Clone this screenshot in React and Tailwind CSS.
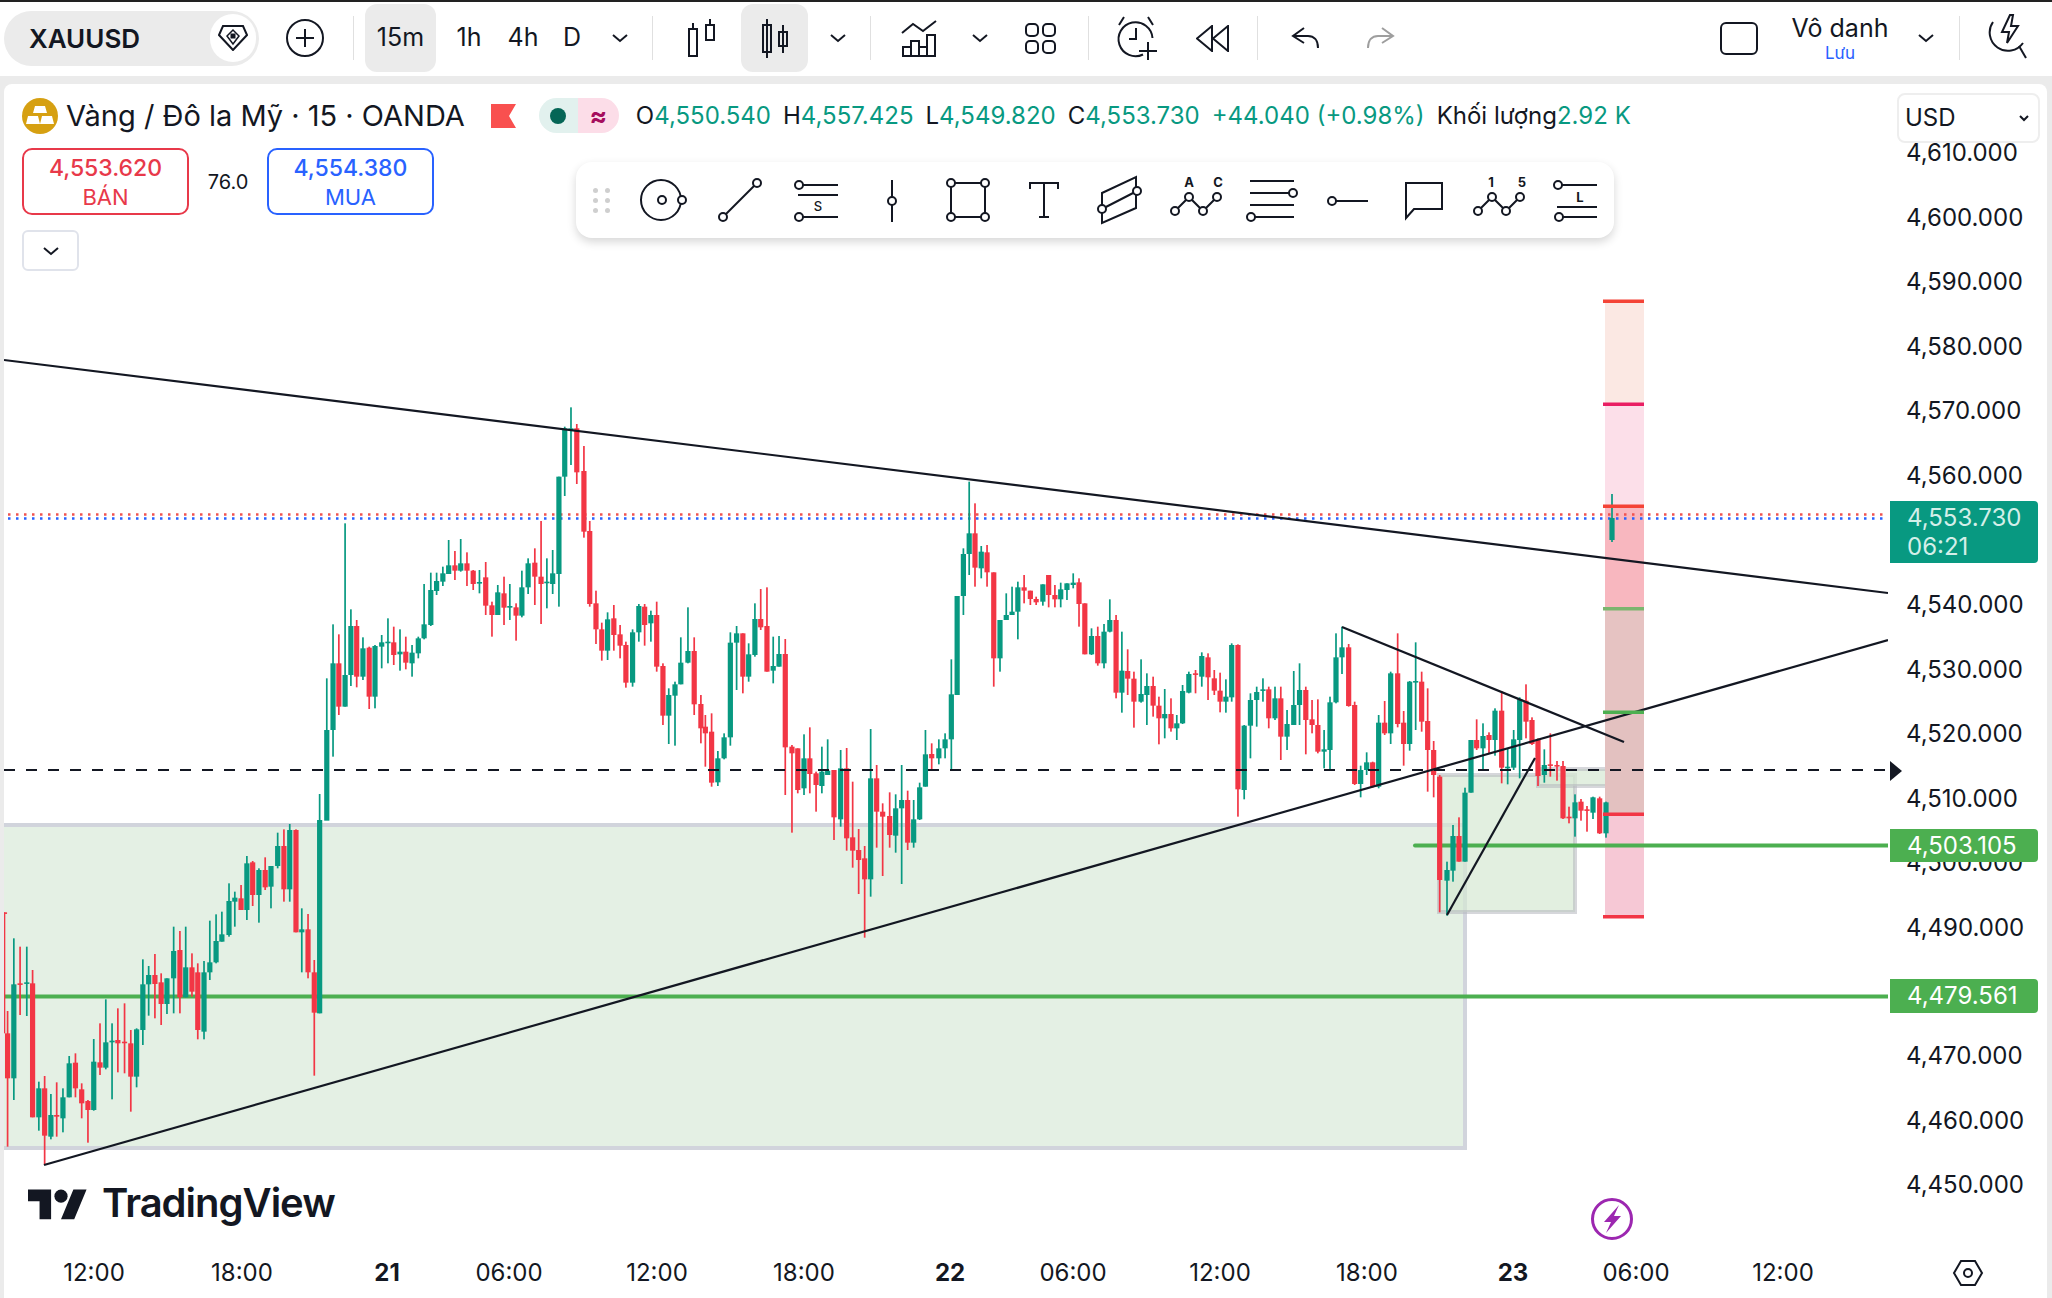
import React from 'react';

// candles traced off the chart: [x, bodyTop, bodyBottom, wickTop, wickBottom, isUp]
const trace = (ox, sx, oy, sy, rows) =>
  rows.map(([x, t, b, wt, wb, up]) => ({
    x: ox + x / sx,
    t: oy + t / sy,
    b: oy + b / sy,
    wt: oy + wt / sy,
    wb: oy + wb / sy,
    up,
  }));

const leftRows = [
  [10, 337, 337, 337, 700, 0], [17, 700, 835, 633, 1040, 0], [31, 553, 835, 415, 900, 1], [45, 550, 553, 440, 645, 0],
  [60, 547, 550, 440, 648, 1], [73, 550, 952, 510, 952, 0], [87, 865, 952, 845, 992, 1], [100, 865, 1007, 828, 1095, 0],
  [114, 945, 1010, 882, 1018, 1], [127, 945, 950, 847, 1010, 0], [141, 892, 955, 865, 997, 1], [155, 790, 892, 768, 892, 1],
  [169, 788, 865, 760, 892, 0], [183, 868, 910, 850, 955, 0], [197, 903, 930, 900, 1028, 0], [210, 785, 930, 717, 932, 1],
  [224, 787, 803, 670, 825, 0], [237, 727, 803, 598, 808, 1], [251, 722, 727, 670, 898, 1], [264, 720, 730, 625, 817, 0],
  [279, 725, 728, 610, 820, 0], [293, 730, 830, 690, 935, 0], [306, 688, 830, 685, 862, 1], [320, 553, 690, 478, 735, 1],
  [333, 525, 553, 498, 647, 1], [347, 525, 552, 462, 655, 0], [361, 547, 612, 520, 675, 0], [374, 535, 612, 535, 642, 1],
  [389, 453, 535, 380, 640, 1], [403, 450, 592, 393, 640, 0], [416, 502, 592, 380, 592, 1], [430, 502, 575, 460, 590, 0],
  [443, 517, 690, 490, 718, 0], [457, 517, 695, 483, 718, 1], [470, 487, 517, 362, 540, 1], [484, 423, 487, 343, 490, 1],
  [497, 403, 425, 335, 425, 1], [513, 303, 405, 250, 410, 1], [526, 293, 305, 275, 380, 1], [540, 295, 330, 255, 330, 0],
  [553, 190, 330, 168, 360, 1], [566, 187, 285, 183, 318, 0], [580, 210, 285, 205, 368, 1], [594, 210, 262, 172, 270, 0],
  [607, 198, 260, 198, 325, 1], [622, 138, 198, 98, 205, 1], [636, 138, 268, 88, 305, 0], [649, 90, 268, 72, 305, 1],
  [663, 90, 397, 88, 397, 0], [676, 388, 397, 325, 517, 1], [690, 388, 517, 342, 535, 0], [704, 517, 638, 480, 827, 0],
  [716, 60, 640, -18, 640, 1],
];

const upperRows = [
  [732, 1050, 1322, 895, 1130, 1], [746, 850, 1050, 733, 1130, 1], [759, 850, 980, 763, 1005, 0], [773, 885, 980, 430, 980, 1],
  [786, 738, 885, 688, 918, 1], [799, 738, 890, 720, 922, 0], [813, 805, 890, 772, 900, 1], [827, 803, 950, 800, 987, 0],
  [840, 798, 950, 795, 985, 1], [855, 787, 800, 765, 865, 1], [869, 785, 788, 715, 850, 1], [882, 787, 825, 740, 855, 0],
  [896, 815, 823, 748, 872, 1], [909, 815, 848, 770, 868, 0], [923, 818, 850, 795, 890, 1], [937, 775, 820, 770, 835, 1],
  [950, 733, 775, 612, 778, 1], [965, 630, 735, 578, 738, 1], [978, 603, 633, 578, 645, 1], [992, 580, 605, 560, 618, 1],
  [1005, 556, 582, 480, 582, 1], [1019, 556, 572, 513, 600, 0], [1032, 550, 572, 477, 575, 1], [1046, 550, 572, 517, 618, 0],
  [1060, 572, 612, 570, 630, 0], [1074, 606, 609, 570, 640, 1], [1088, 592, 677, 546, 705, 0], [1102, 676, 705, 665, 770, 0],
  [1115, 637, 705, 615, 705, 1], [1129, 640, 683, 590, 735, 0], [1142, 678, 683, 612, 720, 1], [1156, 682, 707, 670, 782, 0],
  [1169, 622, 707, 572, 712, 1], [1183, 550, 622, 535, 642, 1], [1198, 548, 590, 505, 675, 0], [1212, 590, 612, 423, 732, 0],
  [1225, 605, 608, 535, 685, 1], [1238, 580, 612, 510, 642, 1], [1252, 290, 582, 290, 680, 1], [1265, 145, 290, 140, 348, 1],
  [1279, 145, 152, 82, 255, 1], [1292, 145, 277, 132, 312, 0], [1308, 273, 455, 198, 473, 0], [1321, 453, 672, 423, 680, 0],
  [1335, 670, 748, 632, 792, 0], [1348, 748, 812, 728, 842, 0], [1361, 718, 812, 697, 840, 1], [1375, 715, 765, 675, 812, 0],
  [1389, 763, 797, 735, 835, 0], [1402, 795, 908, 785, 923, 0], [1417, 757, 908, 748, 920, 1], [1431, 678, 757, 672, 785, 1],
  [1444, 680, 735, 672, 797, 0], [1458, 705, 730, 692, 785, 1], [1471, 705, 860, 665, 875, 0], [1485, 858, 1007, 850, 1035, 0],
  [1498, 945, 1007, 925, 1092, 1], [1512, 913, 947, 905, 1097, 1], [1525, 848, 913, 772, 913, 1], [1541, 813, 848, 682, 850, 1],
  [1555, 813, 973, 772, 1005, 0],
];

const middleRows = [
  [2, 912, 985, 885, 1030, 0], [12, 980, 1000, 945, 1100, 0], [26, 995, 1148, 940, 1160, 0], [40, 1075, 1147, 1053, 1158, 1],
  [54, 1012, 1075, 1000, 1078, 1], [68, 728, 1012, 697, 1037, 1], [82, 700, 728, 678, 870, 1], [96, 700, 830, 700, 880, 0],
  [109, 763, 830, 730, 845, 1], [123, 657, 765, 610, 770, 1], [136, 657, 682, 567, 690, 0], [150, 678, 815, 562, 815, 0],
  [164, 798, 812, 710, 850, 1], [177, 762, 800, 708, 800, 1], [191, 762, 1042, 717, 1185, 0], [206, 1040, 1060, 1035, 1298, 0],
  [219, 1045, 1170, 1045, 1180, 0], [233, 1075, 1165, 1003, 1185, 1], [246, 1075, 1122, 982, 1180, 0], [260, 1120, 1155, 1115, 1235, 0],
  [273, 1115, 1158, 1040, 1180, 1], [286, 1112, 1125, 1018, 1125, 1],
];

const dipRows = [
  [102, 30, 172, 30, 240, 0], [122, 25, 178, -30, 200, 1], [140, 25, 235, -36, 272, 0], [158, 232, 272, 65, 323, 0],
  [176, 270, 300, 207, 402, 0], [194, 295, 358, 258, 533, 0], [212, 55, 358, -93, 410, 1], [230, 55, 155, 15, 263, 0],
  [248, 155, 170, 130, 348, 0], [269, 168, 225, 97, 263, 0], [287, 145, 227, 103, 278, 1], [305, 120, 145, 15, 372, 1],
  [323, 120, 248, 92, 270, 0], [341, 178, 248, 120, 263, 1], [359, 82, 178, 68, 180, 1],
];

const afterDipRows = [
  [505, 1063, 1160, 990, 1160, 1], [519, 1062, 1075, 1030, 1110, 0], [535, 1045, 1075, 1018, 1093, 1], [549, 1018, 1045, 1000, 1075, 1],
  [563, 883, 1018, 778, 1112, 1], [576, 588, 885, 588, 885, 1], [590, 462, 588, 445, 645, 1], [603, 400, 462, 245, 525, 1],
  [616, 400, 503, 310, 560, 0], [630, 455, 505, 438, 535, 1], [643, 457, 517, 435, 560, 0], [658, 517, 775, 517, 860, 0],
  [672, 660, 775, 660, 815, 1], [686, 645, 660, 580, 660, 1], [699, 635, 645, 560, 645, 1], [712, 562, 635, 545, 718, 1],
  [726, 562, 572, 525, 610, 0], [740, 572, 597, 572, 615, 0], [753, 597, 607, 590, 615, 0], [768, 553, 605, 553, 617, 1],
  [781, 525, 585, 525, 622, 0], [795, 585, 598, 555, 622, 0], [808, 568, 598, 548, 622, 1], [822, 550, 570, 550, 600, 1],
  [836, 548, 555, 520, 565, 1], [849, 547, 612, 535, 680, 0], [862, 610, 763, 610, 763, 0], [877, 708, 763, 685, 765, 1],
  [891, 708, 790, 680, 797, 0], [905, 695, 790, 672, 805, 1], [918, 660, 695, 598, 697, 1], [932, 660, 878, 645, 895, 0],
  [945, 812, 878, 695, 938, 1], [958, 813, 836, 748, 885, 0], [972, 836, 905, 815, 983, 0], [988, 882, 905, 778, 908, 1],
  [1001, 858, 885, 820, 975, 1], [1015, 858, 917, 830, 950, 0], [1028, 917, 955, 890, 1033, 0], [1041, 942, 955, 867, 1015, 1],
  [1055, 942, 985, 895, 995, 0], [1068, 970, 985, 945, 1020, 1], [1081, 873, 970, 855, 972, 1], [1095, 822, 878, 815, 880, 1],
  [1110, 820, 823, 810, 880, 0], [1124, 768, 830, 757, 860, 1], [1138, 772, 832, 760, 900, 0], [1152, 835, 872, 810, 885, 0],
  [1165, 872, 905, 818, 937, 0], [1178, 890, 905, 838, 938, 1], [1191, 735, 892, 730, 905, 1], [1205, 735, 1168, 733, 1250, 0],
  [1219, 977, 1170, 975, 1198, 1], [1233, 900, 977, 880, 1075, 1], [1247, 876, 900, 860, 980, 1], [1261, 868, 872, 835, 905, 1],
  [1274, 868, 955, 860, 985, 0], [1288, 895, 955, 860, 960, 1], [1301, 895, 1010, 860, 1080, 0], [1315, 972, 1010, 930, 1050, 1],
  [1330, 915, 975, 813, 975, 1], [1343, 870, 915, 790, 975, 1], [1357, 870, 960, 860, 1063, 0], [1371, 958, 975, 900, 1000, 0],
  [1384, 975, 1055, 898, 1060, 0], [1398, 1048, 1055, 990, 1105, 1],
];

const rightRows = [
  [90, 247, 390, 230, 448, 1], [108, 112, 247, 40, 250, 1], [126, 82, 112, 20, 162, 1], [146, 82, 258, 72, 260, 0],
  [164, 255, 492, 245, 495, 0], [182, 450, 492, 437, 532, 1], [200, 427, 450, 397, 465, 1], [218, 427, 500, 425, 503, 0],
  [236, 308, 500, 285, 505, 1], [254, 308, 340, 243, 345, 0], [272, 160, 340, 155, 372, 1], [293, 160, 312, 40, 322, 0],
  [311, 308, 372, 273, 437, 0], [329, 185, 372, 183, 392, 1], [347, 183, 187, 67, 330, 1], [365, 185, 305, 155, 335, 0],
  [383, 303, 390, 205, 515, 0], [401, 390, 465, 363, 532, 0], [419, 470, 780, 465, 877, 0], [441, 750, 782, 725, 887, 1],
  [459, 648, 752, 615, 785, 1], [477, 648, 725, 592, 725, 0], [495, 518, 725, 503, 725, 1], [513, 360, 518, 360, 518, 1],
  [530, 360, 385, 298, 390, 0], [549, 348, 385, 310, 447, 1], [567, 345, 360, 337, 402, 0], [585, 272, 360, 265, 407, 1],
  [605, 272, 443, 213, 490, 0], [623, 440, 445, 385, 493, 1], [641, 358, 443, 330, 450, 1], [659, 237, 360, 232, 475, 1],
  [678, 242, 305, 193, 355, 0], [696, 300, 372, 292, 375, 0], [714, 360, 468, 355, 498, 0], [733, 435, 465, 388, 488, 1],
  [751, 433, 437, 340, 470, 0], [771, 435, 437, 423, 482, 0], [789, 438, 595, 423, 597, 0], [807, 590, 595, 560, 610, 0],
  [825, 547, 595, 523, 650, 1], [843, 545, 572, 537, 602, 0], [861, 568, 572, 558, 635, 0], [879, 532, 578, 530, 597, 1],
  [899, 535, 640, 530, 642, 0], [918, 547, 640, 545, 653, 1],
];

const candles = [
  ...trace(0, 2.24, 800, 3, leftRows),
  ...trace(0, 2.24, 380, 3, upperRows),
  ...trace(700, 2.24, 400, 3, middleRows),
  ...trace(800, 3, 760, 3, dipRows),
  ...trace(700, 2.24, 400, 3, afterDipRows),
  ...trace(1300, 3, 620, 3, rightRows),
  { x: 1612, t: 518, b: 540, wt: 494, wb: 542, up: 1 },
];

const priceTicks = [
  ['4,610.000', 153], ['4,600.000', 217.5], ['4,590.000', 282], ['4,580.000', 346.5], ['4,570.000', 411],
  ['4,560.000', 475.5], ['4,540.000', 605], ['4,530.000', 669.5], ['4,520.000', 734], ['4,510.000', 798.5],
  ['4,500.000', 863], ['4,490.000', 927.5], ['4,470.000', 1056], ['4,460.000', 1120.5], ['4,450.000', 1185],
];

const timeTicks = [
  ['12:00', 94], ['18:00', 242], ['21', 387, true], ['06:00', 509], ['12:00', 657], ['18:00', 804],
  ['22', 950, true], ['06:00', 1073], ['12:00', 1220], ['18:00', 1367], ['23', 1513, true], ['06:00', 1636], ['12:00', 1783],
];

const fibBands = [
  { y1: 301, y2: 404, fill: '#fbe8e3', tick: '#f44336' },
  { y1: 404, y2: 506, fill: '#fcdfe9', tick: '#e91e63' },
  { y1: 506, y2: 608.5, fill: '#f8b7bf', tick: '#f44336' },
  { y1: 608.5, y2: 712, fill: '#e6c3c2', tick: '#7cb56f' },
  { y1: 712, y2: 814, fill: '#e3c1c0', tick: '#4caf50' },
  { y1: 814, y2: 917, fill: '#f6c8d5', tick: '#f23645' },
];

const GREEN = '#089981';
const RED = '#f23645';
const INK = '#131722';

const Node = ({ x, y }) => <circle cx={x} cy={y} r="4" fill="white" stroke={INK} strokeWidth="2" />;

const ToolIcon = ({ children }) => (
  <div className="flex w-[76px] shrink-0 items-center justify-center">
    <svg width="48" height="48" viewBox="0 0 48 48" fill="none" stroke={INK} strokeWidth="2" className="overflow-visible">
      {children}
    </svg>
  </div>
);

const IconLabel = ({ x, y, children, bold }) => (
  <text
    x={x}
    y={y}
    textAnchor="middle"
    stroke="none"
    fill={INK}
    fontSize="13"
    fontWeight={bold ? 700 : 500}
    fontFamily="Inter, sans-serif"
  >
    {children}
  </text>
);

const DrawingToolbar = () => (
  <div className="absolute left-[572px] top-[78px] flex h-[76px] w-[1038px] rounded-2xl bg-white shadow-[0_4px_10px_rgba(0,0,0,0.16)]">
    <div className="grid w-[50px] shrink-0 grid-cols-[5px_5px] content-center justify-center gap-x-[7px] gap-y-[5px]">
      {[0, 1, 2, 3, 4, 5].map((d) => (
        <span key={d} className="h-[5px] w-[5px] rounded-full bg-[#cfcfcf]" />
      ))}
    </div>
    <ToolIcon>
      <circle cx="21" cy="24" r="20" />
      <circle cx="22" cy="24" r="4" />
      <Node x="42" y="24" />
    </ToolIcon>
    <ToolIcon>
      <path d="M7 41L41 7" />
      <Node x="7" y="41" />
      <Node x="41" y="7" />
    </ToolIcon>
    <ToolIcon>
      <path d="M7 9H46M6 19H46M7 41H46" />
      <Node x="7" y="9" />
      <Node x="7" y="41" />
      <IconLabel x="26" y="35">S</IconLabel>
    </ToolIcon>
    <ToolIcon>
      <path d="M24 4V46" />
      <Node x="24" y="25" />
    </ToolIcon>
    <ToolIcon>
      <path d="M7 7H41V41H7Z" />
      <Node x="7" y="7" />
      <Node x="41" y="7" />
      <Node x="7" y="41" />
      <Node x="41" y="41" />
    </ToolIcon>
    <ToolIcon>
      <path d="M10 13V7H38V13M24 7V41M19 41H29" />
    </ToolIcon>
    <ToolIcon>
      <path d="M6 17L40 1V32L6 47ZM6 33L41 15" />
      <Node x="6" y="33" />
      <Node x="41" y="15" />
    </ToolIcon>
    <ToolIcon>
      <path d="M3 35L17 21L31 35L45 21" />
      <Node x="3" y="35" />
      <Node x="17" y="21" />
      <Node x="31" y="35" />
      <Node x="45" y="21" />
      <IconLabel x="17" y="11" bold>A</IconLabel>
      <IconLabel x="46" y="11" bold>C</IconLabel>
    </ToolIcon>
    <ToolIcon>
      <path d="M2 5H46M2 17H41M2 29H46M7 41H46" />
      <Node x="45" y="17" />
      <Node x="3" y="41" />
    </ToolIcon>
    <ToolIcon>
      <path d="M8 25H44" />
      <Node x="8" y="25" />
    </ToolIcon>
    <ToolIcon>
      <path d="M6 42V7H42V33H14Z" />
    </ToolIcon>
    <ToolIcon>
      <path d="M2 35L16 21L30 35L44 21" />
      <Node x="2" y="35" />
      <Node x="16" y="21" />
      <Node x="30" y="35" />
      <Node x="44" y="21" />
      <IconLabel x="15" y="11" bold>1</IconLabel>
      <IconLabel x="46" y="11" bold>5</IconLabel>
    </ToolIcon>
    <ToolIcon>
      <path d="M7 9H45M5 31H45M7 41H45" />
      <Node x="6" y="9" />
      <Node x="7" y="41" />
      <IconLabel x="28" y="26" bold>L</IconLabel>
    </ToolIcon>
  </div>
);

const Chevron = ({ className = '' }) => (
  <svg width="16" height="10" viewBox="0 0 16 10" fill="none" stroke={INK} strokeWidth="2" className={className}>
    <path d="M1 2L8 8L15 2" />
  </svg>
);

const Separator = ({ className = '' }) => <div className={`h-11 w-px shrink-0 bg-[#e0e0e0] ${className}`} />;

const Interval = ({ w, children, active }) => (
  <div className={`flex h-[68px] shrink-0 items-center justify-center rounded-xl text-[25px] text-[#131722] ${w} ${active ? 'bg-[#ebebeb]' : ''}`}>
    {children}
  </div>
);

const Slot = ({ w, active, children }) => (
  <div className={`flex h-[68px] shrink-0 items-center justify-center rounded-xl ${w} ${active ? 'bg-[#ebebeb]' : ''}`}>
    {children}
  </div>
);

const TopBar = () => (
  <header className="flex h-[76px] shrink-0 items-center border-t-2 border-[#222222] bg-white pb-[2px] pl-1">
    <div className="flex h-[55px] w-[255px] shrink-0 items-center justify-between rounded-full bg-[#ebebeb] pl-[25px] pr-[3px]">
      <span className="text-[26px] font-semibold text-[#131722]">XAUUSD</span>
      <div className="flex h-[48px] w-[46px] items-center justify-center rounded-full bg-white">
        <svg width="30" height="26" viewBox="0 0 30 26" fill="none" stroke={INK} strokeWidth="2">
          <path d="M5 1H25L29 10L15 25L1 10Z" />
          <path d="M15 5L9 11L15 19L21 11Z" strokeWidth="1.5" />
          <rect x="12.5" y="8.5" width="5" height="5" fill={INK} stroke="none" />
        </svg>
      </div>
    </div>
    <Slot w="w-[92px]">
      <svg width="38" height="38" viewBox="0 0 38 38" fill="none" stroke={INK} strokeWidth="2">
        <circle cx="19" cy="19" r="18" />
        <path d="M19 10V28M10 19H28" />
      </svg>
    </Slot>
    <Separator className="ml-[2px]" />
    <div className="ml-[11px] flex items-center">
      <Interval w="w-[71px]" active>15m</Interval>
      <Interval w="w-[66px]">1h</Interval>
      <Interval w="w-[42px]">4h</Interval>
      <Interval w="w-[56px]">D</Interval>
      <Slot w="w-[40px]"><Chevron /></Slot>
    </div>
    <Separator className="ml-[12px]" />
    <Slot w="w-[88px]">
      <svg width="28" height="38" viewBox="0 0 28 38" fill="none" stroke={INK} strokeWidth="2" className="ml-[9px]">
        <path d="M1 10H9V37H1ZM5 4V10M18 6H26V21H18ZM22 0V6" />
      </svg>
    </Slot>
    <Slot w="w-[67px]" active>
      <svg width="26" height="40" viewBox="0 0 26 40" fill="none" stroke={INK} strokeWidth="2">
        <path d="M1 7H9V34H1ZM5 1V40M17 14H25V28H17ZM21 7V35" />
      </svg>
    </Slot>
    <Slot w="w-[60px]"><Chevron /></Slot>
    <Separator className="ml-[2px]" />
    <Slot w="w-[96px]">
      <svg width="36" height="37" viewBox="0 0 36 37" fill="none" stroke={INK} strokeWidth="2">
        <path d="M1 13L12 4L22 11L35 1" />
        <path d="M2 27H10V36H2ZM10 36V21H18V36ZM18 36V27H26V36ZM26 36V15H34V36Z" />
      </svg>
    </Slot>
    <Slot w="w-[26px]"><Chevron /></Slot>
    <Slot w="w-[95px]">
      <svg width="31" height="31" viewBox="0 0 31 31" fill="none" stroke={INK} strokeWidth="2">
        <rect x="1" y="1" width="12" height="12" rx="4" />
        <rect x="18" y="1" width="12" height="12" rx="4" />
        <rect x="1" y="18" width="12" height="12" rx="4" />
        <rect x="18" y="18" width="12" height="12" rx="4" />
      </svg>
    </Slot>
    <Separator />
    <Slot w="w-[93px]">
      <svg width="44" height="44" viewBox="0 0 44 44" fill="none" stroke={INK} strokeWidth="2">
        <path d="M29 38.5A17 17 0 1 1 38.5 22" />
        <path d="M22 12V23H15" />
        <path d="M5 9L10 1M39 9L34 1" />
        <path d="M34 26V44M25 35H43" />
      </svg>
    </Slot>
    <Slot w="w-[62px]">
      <svg width="34" height="27" viewBox="0 0 34 27" fill="none" stroke={INK} strokeWidth="2">
        <path d="M1 13.5L16 1V26ZM17 13.5L32 1V26Z" />
      </svg>
    </Slot>
    <Separator className="ml-[13px]" />
    <Slot w="w-[94px]">
      <svg width="28" height="22" viewBox="0 0 28 22" fill="none" stroke={INK} strokeWidth="2">
        <path d="M13 1L2 9L13 16M2 9H17C23 9 27 13 27 21" />
      </svg>
    </Slot>
    <Slot w="w-[58px]">
      <svg width="28" height="22" viewBox="0 0 28 22" fill="none" stroke="#9e9e9e" strokeWidth="2">
        <path d="M15 1L26 9L15 16M26 9H11C5 9 1 13 1 21" />
      </svg>
    </Slot>
    <div className="flex-1" />
    <div className="h-[33px] w-[38px] shrink-0 rounded-md border-[2.5px] border-[#131722]" />
    <div className="ml-[31px] flex w-[102px] shrink-0 flex-col items-center">
      <span className="text-[25px] leading-[30px] text-[#131722]">Vô danh</span>
      <span className="text-[17px] leading-[20px] text-[#2962ff]">Lưu</span>
    </div>
    <Slot w="w-[70px]"><Chevron /></Slot>
    <Separator className="ml-[-2px]" />
    <svg width="64" height="48" viewBox="0 0 64 48" fill="none" stroke={INK} strokeWidth="2" className="ml-[28px] shrink-0">
      <path d="M5 8A17 17 0 1 0 35 29" />
      <path d="M22 1L14 18H21L19 29L30 12H23L25 1Z" />
      <path d="M31 32L38 44" />
    </svg>
  </header>
);

const Legend = () => (
  <div className="ml-[18px] mt-[14px] flex h-[35px] items-center whitespace-nowrap text-[24px] text-[#131722]">
    <svg width="36" height="36" viewBox="0 0 36 36" className="shrink-0">
      <circle cx="18" cy="18" r="18" fill="#d6a012" />
      <path d="M13 8H23L25 15H11ZM6 18H16L18 26H4ZM20 18H30L32 26H18Z" fill="white" />
    </svg>
    <span className="ml-2 text-[29px]">Vàng / Đô la Mỹ · 15 · OANDA</span>
    <svg width="26" height="24" viewBox="0 0 26 24" className="ml-[26px] shrink-0">
      <path d="M0 0H25L18 12L25 24H0Z" fill="#f9504f" />
    </svg>
    <div className="ml-[22px] flex h-[35px] w-[80px] shrink-0 overflow-hidden rounded-full">
      <div className="flex w-[39px] items-center justify-center bg-[#e2f1ee]">
        <span className="h-4 w-4 rounded-full bg-[#056656]" />
      </div>
      <div className="flex flex-1 items-center justify-center bg-[#fcdde8] text-[26px] font-bold text-[#a50e5d]">≈</div>
    </div>
    <div className="ml-[17px] flex items-center text-[#089981]">
      <span className="text-[#131722]">O</span>4,550.540
      <span className="ml-3 text-[#131722]">H</span>4,557.425
      <span className="ml-3 text-[#131722]">L</span>4,549.820
      <span className="ml-3 text-[#131722]">C</span>4,553.730
      <span className="ml-3">+44.040 (+0.98%)</span>
      <span className="ml-3 text-[#131722]">Khối lượng</span>2.92 K
    </div>
  </div>
);

const QuoteBox = ({ price, label, tone }) => (
  <div className={`flex h-[67px] w-[167px] shrink-0 flex-col items-center justify-center rounded-[10px] border-2 ${tone}`}>
    <span className="text-[23px] font-medium leading-[30px]">{price}</span>
    <span className="text-[22px] leading-[28px]">{label}</span>
  </div>
);

const Trading = () => (
  <div className="ml-[18px]">
    <div className="mt-[15px] flex items-center">
      <QuoteBox price="4,553.620" label="BÁN" tone="border-[#e8394a] text-[#e8394a]" />
      <span className="w-[78px] shrink-0 text-center text-[20px] text-[#131722]">76.0</span>
      <QuoteBox price="4,554.380" label="MUA" tone="border-[#2962ff] text-[#2962ff]" />
    </div>
    <div className="mt-[15px] flex h-[41px] w-[57px] items-center justify-center rounded-md border-2 border-[#e0e3eb] bg-white">
      <Chevron />
    </div>
  </div>
);

const Chart = () => (
  <svg width="2052" height="1298" viewBox="0 0 2052 1298" fill="none" className="absolute left-[-4px] top-[-84px]">
    <defs>
      <clipPath id="plot">
        <rect x="4" y="84" width="1884" height="1130" />
      </clipPath>
    </defs>
    <g clipPath="url(#plot)">
      {/* zones */}
      <path d="M0 825H1465V1148H0Z" fill="#e4f0e4" stroke="#d1d4dc" strokeWidth="4" />
      <path d="M1439 775H1575V912H1439Z" fill="#d5e8d3" fillOpacity="0.7" stroke="#b4b7bd" strokeOpacity="0.55" strokeWidth="4" />
      <path d="M1538 769H1620V786H1538Z" fill="#d5e8d3" fillOpacity="0.7" stroke="#b4b7bd" strokeOpacity="0.55" strokeWidth="4" />
      {/* fib column */}
      {fibBands.map((b) => (
        <rect key={b.y1} x="1605" y={b.y1} width="39" height={b.y2 - b.y1} fill={b.fill} />
      ))}
      {/* horizontal levels */}
      <path d="M1415 845.5H1888" stroke="#4caf50" strokeWidth="4" strokeLinecap="round" />
      <path d="M0 996.5H1888" stroke="#4caf50" strokeWidth="4" />
      <path d="M0 514.5H1888" stroke="#ef5350" strokeWidth="2.5" strokeDasharray="2.5 5.5" />
      <path d="M0 518.5H1888" stroke="#2962ff" strokeWidth="2.5" strokeDasharray="2.5 5.5" />
      {/* candles */}
      {candles.map((c, i) => (
        <g key={i} fill={c.up ? GREEN : RED}>
          <rect x={c.x - 0.85} y={c.wt} width="1.7" height={c.wb - c.wt} />
          <rect x={c.x - 2.6} y={c.t} width="5.2" height={Math.max(c.b - c.t, 1.6)} />
        </g>
      ))}
      {/* drawn lines */}
      <g stroke="#131722" strokeWidth="2.2">
        <path d="M4 360L1888 593" />
        <path d="M44 1165L1888 640" />
        <path d="M1342 627L1624 742" />
        <path d="M1447 915L1535 758" />
      </g>
      <path d="M4 770H1888" stroke="#131722" strokeWidth="2" strokeDasharray="11 11" />
      {fibBands.map((b) => (
        <rect key={b.tick + b.y1} x="1603" y={b.y1 - 1.5} width="41" height="3.5" fill={b.tick} />
      ))}
      <rect x="1603" y="915" width="41" height="3.5" fill="#f23645" />
    </g>
    <path d="M1890 761L1902 771L1890 781Z" fill="#131722" />
    {/* logo */}
    <g transform="translate(28 1183) scale(1.65)" fill="#131722">
      <path d="M14 22H7V11H0V4h14v18zM28 22h-8l7.5-18h8L28 22z" />
      <circle cx="20" cy="8" r="4" />
    </g>
    {/* bolt badge */}
    <circle cx="1612" cy="1219" r="19.5" stroke="#9c27b0" strokeWidth="3" fill="white" />
    <path d="M1619 1205L1604 1222H1611L1606 1233L1621 1216H1614Z" fill="#9c27b0" />
    {/* axis settings */}
    <path d="M1954 1273L1961 1261H1975L1982 1273L1975 1285H1961Z" stroke="#131722" strokeWidth="2" />
    <circle cx="1968" cy="1273" r="4" stroke="#131722" strokeWidth="2" />
  </svg>
);

const PriceAxis = () => (
  <>
    {priceTicks.map(([label, y]) => (
      <span
        key={label}
        className="absolute left-[1902px] -translate-y-1/2 text-[24px] leading-none text-[#131722]"
        style={{ top: y - 84 }}
      >
        {label}
      </span>
    ))}
    <div className="absolute left-[1886px] top-[417px] flex h-[62px] w-[148px] flex-col justify-center rounded-r bg-[#089981] pl-[17px] text-[24px] leading-[29px] text-[#d4efe9]">
      <span>4,553.730</span>
      <span>06:21</span>
    </div>
    <div className="absolute left-[1886px] top-[745px] flex h-[33px] w-[148px] items-center rounded-r bg-[#4caf50] pl-[17px] text-[24px] text-white">
      4,503.105
    </div>
    <div className="absolute left-[1886px] top-[895px] flex h-[34px] w-[148px] items-center rounded-r bg-[#4caf50] pl-[17px] text-[24px] text-white">
      4,479.561
    </div>
  </>
);

const TimeAxis = () => (
  <>
    {timeTicks.map(([label, x, bold]) => (
      <span
        key={label + x}
        className={`absolute top-[1174px] -translate-x-1/2 text-[24px] leading-[30px] text-[#131722] ${bold ? 'font-bold' : ''}`}
        style={{ left: x - 4 }}
      >
        {label}
      </span>
    ))}
  </>
);

const App = () => (
  <div className="flex h-[1298px] w-[2052px] flex-col overflow-hidden bg-[#ebebeb] font-['Inter',sans-serif]">
    <TopBar />
    <main className="relative ml-1 mr-[5px] mt-2 flex-1 overflow-hidden rounded-t-lg bg-white">
      <Chart />
      <div className="relative">
        <Legend />
        <Trading />
      </div>
      <DrawingToolbar />
      <PriceAxis />
      <TimeAxis />
      <span className="absolute left-[98px] top-[1094px] text-[40px] font-semibold leading-[50px] tracking-[-1px] text-[#131722]">
        TradingView
      </span>
      <div className="absolute left-[1893px] top-[9px] flex h-[50px] w-[143px] items-center justify-between rounded-lg border-2 border-[#eeeeee] bg-white pl-[6px] pr-[9px] text-[24px] text-[#131722]">
        USD
        <svg width="10" height="7" viewBox="0 0 10 7" fill="none" stroke={INK} strokeWidth="2">
          <path d="M1 1L5 5L9 1" />
        </svg>
      </div>
    </main>
  </div>
);

export default App;
